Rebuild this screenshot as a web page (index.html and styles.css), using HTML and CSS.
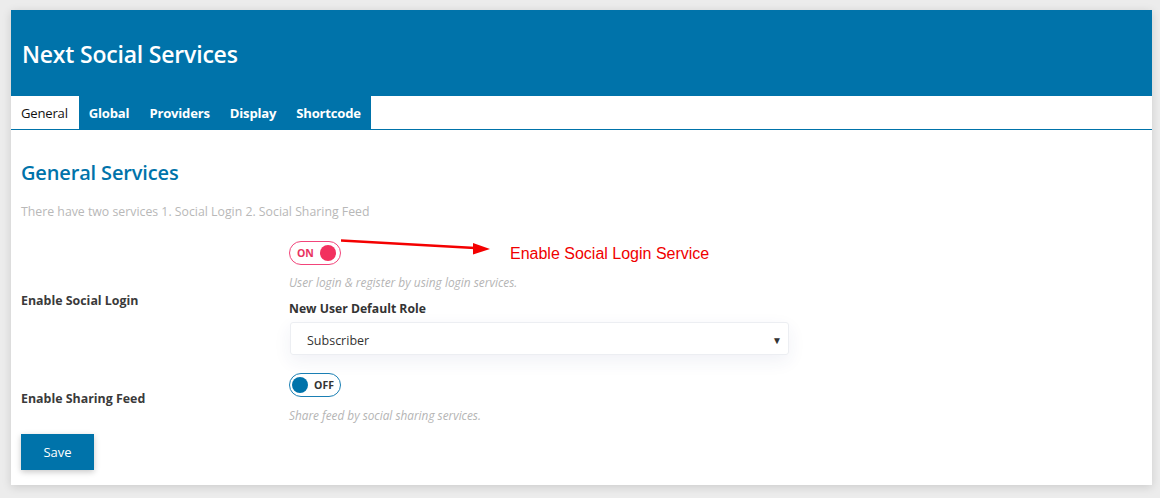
FILE: index.html
```html
<!DOCTYPE html>
<html lang="en">
<head>
<meta charset="utf-8">
<title>Next Social Services</title>
<link rel="stylesheet" href="styles.css">
</head>
<body>
<div class="panel">
  <header class="head">
    <h1 class="title">Next Social Services</h1>
  </header>
  <nav class="tabs">
    <div class="tab-group">
      <a class="tab active">General</a>
      <a class="tab">Global</a>
      <a class="tab">Providers</a>
      <a class="tab">Display</a>
      <a class="tab">Shortcode</a>
    </div>
  </nav>
  <main class="content">
    <h2 class="section-title">General Services</h2>
    <p class="desc">There have two services 1. Social Login 2. Social Sharing Feed</p>
    <div class="form">
      <div class="label">Enable Social Login</div>
      <div class="field">
        <span class="toggle on"><span class="t-text">ON</span><span class="knob"></span></span>
        <p class="hint">User login &amp; register by using login services.</p>
        <div class="sub-label">New User Default Role</div>
        <div class="select"><span>Subscriber</span><span class="caret">&#9660;</span></div>
      </div>
      <div class="label">Enable Sharing Feed</div>
      <div class="field">
        <span class="toggle off"><span class="knob"></span><span class="t-text">OFF</span></span>
        <p class="hint hint2">Share feed by social sharing services.</p>
      </div>
    </div>
    <button class="save">Save</button>
  </main>
  <svg class="arrow" width="160" height="24" viewBox="0 0 160 24">
    <line x1="0" y1="5.5" x2="134" y2="13" stroke="#f40000" stroke-width="2.6"/>
    <polygon points="149,14 132,8 132,19.5" fill="#f40000"/>
  </svg>
  <div class="note">Enable Social Login Service</div>
</div>
</body>
</html>
```

FILE: styles.css
```css
* { box-sizing: border-box; }
html, body { margin: 0; padding: 0; }
body {
  background: #ececec;
  font-family: "Open Sans", "Noto Sans", sans-serif;
  color: #333;
  width: 1160px;
  height: 498px;
  overflow: hidden;
  padding: 10px 8px 0 11px;
}
.panel {
  position: relative;
  width: 1141px;
  height: 475px;
  background: #fff;
  box-shadow: 0 2px 9px rgba(0,0,0,0.14);
}
.head {
  height: 86px;
  background: #0073aa;
  display: flex;
  align-items: center;
  padding: 0 11px;
}
.title {
  margin: 0;
  color: #fff;
  font-size: 23px;
  font-weight: 600;
  letter-spacing: -0.2px;
  padding-top: 2px;
}
.tabs {
  height: 34px;
  border-bottom: 1px solid #0073aa;
  display: flex;
}
.tab-group {
  display: flex;
  background: #0073aa;
  height: 33px;
}
.tab {
  display: flex;
  align-items: center;
  padding: 0 10px;
  color: #fff;
  font-size: 13.1px;
  font-weight: 700;
  letter-spacing: -0.2px;
}
.tab.active {
  background: #fff;
  color: #111;
  font-weight: 400;
  padding: 0 11px 0 10px;
}
.content {
  padding: 29px 10px 0 10px;
}
.section-title {
  margin: 0;
  color: #0073aa;
  font-size: 20px;
  font-weight: 600;
  line-height: 28px;
  letter-spacing: -0.15px;
}
.desc {
  margin: 16px 0 0;
  font-size: 12.3px;
  line-height: 18px;
  color: #b8b8b8;
}
.form {
  display: grid;
  grid-template-columns: 268px 1fr;
  align-items: center;
  row-gap: 14px;
  margin-top: 20px;
}
.label {
  font-size: 12.4px;
  font-weight: 700;
  color: #3a3a3a;
}
.field { display: flex; flex-direction: column; align-items: flex-start; }
.toggle {
  width: 52px;
  height: 24px;
  border-radius: 12px;
  border: 1.5px solid #f2447a;
  display: flex;
  align-items: center;
  padding: 0 4px 0 7px;
  gap: 4px;
}
.toggle .knob {
  width: 16px;
  height: 16px;
  border-radius: 50%;
  background: #f2305e;
}
.toggle .t-text {
  font-size: 10.5px;
  font-weight: 700;
  color: #e8335f;
  flex: 1;
}
.toggle.off {
  border-color: #1a7fb4;
  padding: 0 6px 0 2px;
}
.toggle.off .knob { background: #0073aa; }
.toggle.off .t-text { color: #333; text-align: right; }
.hint {
  margin: 9px 0 0;
  font-size: 11.9px;
  line-height: 16px;
  font-style: italic;
  color: #b5b5b5;
}
.hint2 { margin-top: 10px; font-size: 11.8px; }
.sub-label {
  margin-top: 10px;
  font-size: 12.2px;
  line-height: 18px;
  font-weight: 700;
  color: #333;
}
.select {
  margin: 4px 0 4px 1px;
  width: 499px;
  height: 33px;
  border: 1px solid #eceef2;
  border-radius: 3px;
  box-shadow: 0 6px 18px rgba(40,60,130,0.07);
  display: flex;
  align-items: center;
  justify-content: space-between;
  padding: 3px 6px 0 16px;
  font-size: 12.5px;
  color: #333;
}
.caret { font-size: 10px; color: #333; }
.save {
  margin-top: 11px;
  width: 73px;
  height: 36px;
  border: 0;
  background: #0073aa;
  color: #fff;
  font-family: "Open Sans", "Noto Sans", sans-serif;
  font-size: 13px;
  box-shadow: 0 2px 6px rgba(0,0,0,0.22);
  padding: 0;
}
.arrow {
  position: absolute;
  left: 330px;
  top: 225px;
}
.note {
  position: absolute;
  left: 499px;
  top: 234px;
  font-family: "Liberation Sans", Arial, sans-serif;
  font-size: 16px;
  line-height: 20px;
  color: #f00000;
}
```
